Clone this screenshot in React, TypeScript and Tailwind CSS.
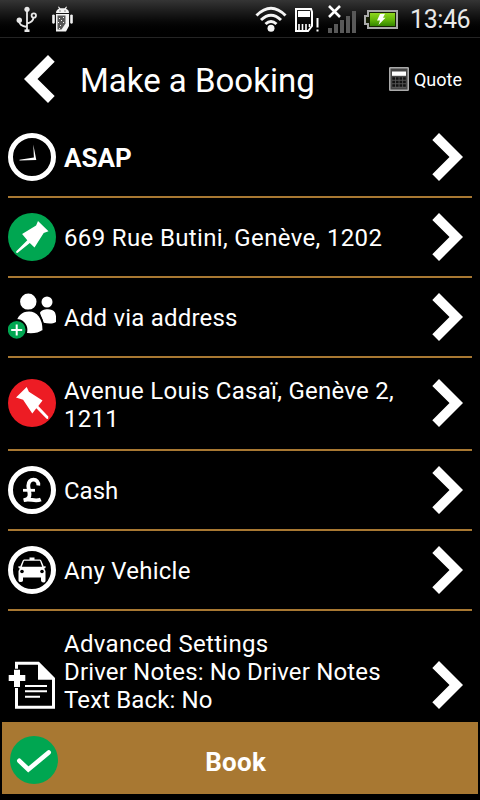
import type { ReactNode } from "react";

function Chevron({ left = false }: { left?: boolean }) {
  return (
    <svg width="32" height="48" viewBox="0 0 32 48" className={left ? "rotate-180" : ""}>
      <path d="M.3 7 7 0l24 24L7 48 .3 41.3 17.5 24z" fill="#fff" />
    </svg>
  );
}

function Ring({ children }: { children: ReactNode }) {
  return (
    <svg width="48" height="48" viewBox="0 0 48 48">
      <circle cx="24" cy="24" r="21.5" fill="none" stroke="#fff" strokeWidth="5" />
      {children}
    </svg>
  );
}

function ClockIcon() {
  return (
    <Ring>
      <path d="M25.3 11.5 28.3 27 11.5 27.4v-.6l14.4-2.2z" fill="#fff" />
    </Ring>
  );
}

function PickupIcon() {
  return (
    <svg width="48" height="48" viewBox="0 0 48 48">
      <circle cx="24" cy="24" r="24" fill="#00a651" />
      <path d="m30 8 10.5 10.2-4.8 1.800-9.200 14.500-4.700-4.500L9.400 40.100 8 39.500l.3-1.300 11-11-5.200-6.200 14-8.500z" fill="#fff" />
    </svg>
  );
}

function DropoffIcon() {
  return (
    <svg width="48" height="48" viewBox="0 0 48 48">
      <circle cx="24" cy="24" r="24" fill="#ed1c24" />
      <path d="m18.700 8 2.200 4.800 13.600 8.700-4.200 5.500 10 10.600-.2 2.400-1.500-.2-10.300-10.600-4 5.300-9.200-13.700L8 18.600z" fill="#fff" />
    </svg>
  );
}

function PeopleIcon() {
  return (
    <svg width="48" height="48" viewBox="0 0 48 48">
      <g fill="#fff">
        <circle cx="39" cy="9" r="5.500" />
        <path d="M32 20c1-4 12-5.500 15-.5 1.500 4 1.300 7 1 9.500-4 2.400-8 1.600-12.500.7z" />
        <circle cx="20.300" cy="8.700" r="9.200" stroke="#000" strokeWidth="2" />
        <path d="M7 31c1-8 6-13.500 14-13.500 9 0 14.500 8 14.500 20-7 5-18.500 5-24.500 0z" stroke="#000" strokeWidth="2" />
      </g>
      <circle cx="8.700" cy="36.800" r="9.800" fill="#00a651" stroke="#000" strokeWidth="1.800" />
      <path d="M8.700 31.500v11M3.200 37h11" stroke="#fff" strokeWidth="2" />
    </svg>
  );
}

function PoundIcon() {
  return (
    <Ring>
      <path
        d="M30.300 19.500c1-7.500-10.300-8.300-10 .3.200 3.500 2 7.500 1 10.700-.7 2.200-2.500 3.400-5.500 3.700 6-2.200 11 2 17-.7"
        fill="none"
        stroke="#fff"
        strokeWidth="3.800"
      />
      <path d="M15 24.300h12" stroke="#fff" strokeWidth="2.800" />
    </Ring>
  );
}

function TaxiIcon() {
  return (
    <Ring>
      <path d="M21.500 14v-2.500h5V14z" fill="#fff" />
      <path
        fillRule="evenodd"
        fill="#fff"
        d="M16 13.500h16q1 0 1.500 1.500l2.300 5.500 1.700-.5v2l-1.300.5 1.300 2.500v10q-.2 1.500-2.200 1.500T33 34.500v-3H15v3q-.2 1.500-2.300 1.500t-2.200-1.500V25l1.300-2.500-1.300-.5v-2l1.700.5 2.300-5.500q.5-1.500 1.500-1.500zM16 14.800l-2.200 6h20.400l-2.200-6z"
      />
      <circle cx="14" cy="25.500" r="1.800" />
      <circle cx="34" cy="25.500" r="1.800" />
    </Ring>
  );
}

function NotesIcon() {
  return (
    <svg width="48" height="48" viewBox="0 0 48 48">
      <path d="M8.500 2.200h21.800l15.200 15.300v28.800h-37z" fill="none" stroke="#fff" strokeWidth="3" />
      <path d="M30 1.500v17.200h17z" fill="#fff" />
      <path d="M17 25h22M17 30.300h22M17 35.700h15" stroke="#fff" strokeWidth="2" />
      <path d="M5 7.700h8V13h5.300v8H13v6H5v-6H0v-8h5z" />
      <path d="M9 8.700V26M.7 17h16.600" stroke="#fff" strokeWidth="6" />
    </svg>
  );
}

function CheckIcon() {
  return (
    <svg width="48" height="48" viewBox="0 0 48 48">
      <circle cx="24" cy="24" r="24" fill="#00a651" />
      <path d="m9.300 24.800 9 8.700L38.700 16.500" fill="none" stroke="#fff" strokeWidth="4.600" strokeLinecap="round" />
    </svg>
  );
}

function CalculatorIcon() {
  return (
    <svg width="20" height="24" viewBox="0 0 20 24">
      <rect x=".75" y=".75" width="18.500" height="22.500" rx=".5" fill="#444" stroke="#aaa" strokeWidth="1.500" />
      <path d="M3 4.500h14v4.300H3z" fill="#fff" />
      <path d="M3 10h14v11H3z" fill="#555" />
      <path d="M3.300 11.500h13.500M3.300 15h13.500M3.300 18.500h13.500" stroke="#111" strokeWidth="2.700" strokeDasharray="2.700 .9" />
    </svg>
  );
}

function UsbIcon() {
  return (
    <svg width="22" height="28" viewBox="0 0 22 28" fill="none" stroke="#e8e8e8" strokeWidth="1.800">
      <path d="M11 3v22M3 15c0 3 2 5 8 6M17.500 11c0 4-2 5.500-6.500 6.500" />
      <circle cx="11" cy="3.300" r="2.600" fill="#e8e8e8" stroke="none" />
      <circle cx="3.300" cy="14.200" r="2.700" fill="#e8e8e8" stroke="none" />
      <circle cx="17.800" cy="9.500" r="2.200" />
      <path d="M8.500 24.700h5" strokeWidth="2.600" />
    </svg>
  );
}

function DebugIcon() {
  return (
    <svg width="24" height="27" viewBox="0 0 24 27" fill="#f2f2f2">
      <path d="M5 7c0-2.500 1.500-3.500 3-4.200L7 1l.8-.5L9.300 2.300h4.400L15.200.5 16 1l-1 1.800c2 .8 3 2 3 4.200z" />
      <path d="M5 8h13v12l-3 5.500H5zM1.200 9q1.300-1.200 2.600 0v8q-1.300 1.500-2.600 0zM19.200 9q1.300-1.200 2.600 0v8q-1.300 1.500-2.600 0z" />
      <path d="M6.500 9.500h8v8l-4 6h-4z" fill="#555" />
      <path d="M8 12h1v1H8zm4-1h1v1h-1zm-2 3h1v1h-1zm-3 2h1v1H7zm5 0h1v1h-1zm-3 3h1v1H9zm-1 3h1v1H8z" />
      <path d="M8.500 4.500h1v1h-1zm5 0h1v1h-1z" fill="#222" />
    </svg>
  );
}

function WifiIcon() {
  return (
    <svg width="32" height="26" viewBox="0 0 32 26" fill="none" stroke="#f5f5f5" strokeWidth="3">
      <path d="M1.500 9.500Q16-5 30.500 9.500M6 14q10-9.500 20 0M10.500 18q5.500-5 11 0" />
      <circle cx="16" cy="22.300" r="3.500" fill="#f5f5f5" stroke="none" />
    </svg>
  );
}

function StorageIcon() {
  return (
    <svg width="24" height="24" viewBox="0 0 24 24">
      <path d="M1 1h15l1 3v14l-4 5H1z" fill="none" stroke="#fff" strokeWidth="2" />
      <path d="M3 3h12v6H3z" fill="#fff" />
      <path d="M4 16v6M7.500 16v6M11 16v6M14.500 16v3" stroke="#fff" strokeWidth="1.600" />
      <path d="M22.500 10v9.500M22.500 21.500V23.500" stroke="#fff" strokeWidth="2" />
    </svg>
  );
}

function SignalIcon() {
  return (
    <svg width="29" height="28" viewBox="0 0 29 28">
      <path d="M0 23h4v5H0zM6 19h4v9H6zM12 15h4v13h-4zM18 11h4v17h-4zM24 6h4v22h-4z" fill="#585858" />
      <path d="m1 1 11 11M12 1 1 12" stroke="#fff" strokeWidth="2.600" />
    </svg>
  );
}

function BatteryIcon() {
  return (
    <svg width="34" height="19" viewBox="0 0 34 19">
      <defs>
        <linearGradient id="charge" x1="0" y1="0" x2="0" y2="1">
          <stop offset="0" stopColor="#8fd61f" />
          <stop offset=".5" stopColor="#66b90a" />
          <stop offset="1" stopColor="#348500" />
        </linearGradient>
      </defs>
      <path d="M3 0h31v19H3v-4H0V5h3z" fill="#aaa" />
      <path d="M5 2h27v15H5v-4H2V7h3z" fill="#172005" />
      <path d="M6 3h25v13H6z" fill="url(#charge)" />
      <path d="m16 4 5-.3-2 4h2.500L14.500 15l1.500-4.500h-3z" fill="#fff" />
    </svg>
  );
}

const rows = [
  { icon: <ClockIcon />, label: "ASAP", style: "h-20", text: "pt-[2px] text-[26px] font-bold" },
  { icon: <PickupIcon />, label: "669 Rue Butini, Genève, 1202", style: "h-20", text: "pt-[2px] tracking-[0.35px]" },
  { icon: <PeopleIcon />, label: "Add via address", style: "h-20", text: "pt-[2px] tracking-[0.2px]" },
  {
    icon: <DropoffIcon />,
    label: "Avenue Louis Casaï, Genève 2, 1211",
    style: "h-[93px] pb-px",
    text: "pt-[4px] tracking-[0.26px]",
  },
  { icon: <PoundIcon />, label: "Cash", style: "h-20", text: "pt-[2px]" },
  { icon: <TaxiIcon />, label: "Any Vehicle", style: "h-20", text: "pt-[2px] tracking-[0.25px]" },
];

export default function App() {
  return (
    <div className="flex h-[800px] w-[480px] flex-col overflow-hidden bg-black font-['Roboto',sans-serif] text-white">
      {/* Status bar */}
      <div className="flex h-[38px] shrink-0 items-start border-b border-[#242424] bg-linear-to-b from-[#353535] to-black">
        <div className="mt-[6px] ml-4">
          <UsbIcon />
        </div>
        <div className="mt-[6px] ml-[13px]">
          <DebugIcon />
        </div>
        <div className="mt-[6px] ml-[180px]">
          <WifiIcon />
        </div>
        <div className="mt-2 ml-2">
          <StorageIcon />
        </div>
        <div className="mt-[5px] ml-[9px]">
          <SignalIcon />
        </div>
        <div className="mt-[10px] ml-[7px]">
          <BatteryIcon />
        </div>
        <span className="mt-[5px] ml-[12px] text-[25px] leading-[30px] tracking-[-0.4px] text-[#e8e8e8]">13:46</span>
      </div>

      {/* Title */}
      <header className="flex h-20 shrink-0 items-center pt-[2px] pl-[23px]">
        <Chevron left />
        <h1 className="ml-[25px] pt-[3px] text-[33px] leading-10">Make a Booking</h1>
        <div className="ml-auto flex items-center gap-[5px] pr-[18px]">
          <CalculatorIcon />
          <span className="pt-[2px] text-lg">Quote</span>
        </div>
      </header>

      <main className="min-h-0 flex-1 overflow-hidden px-2 text-2xl leading-7">
        {rows.map((row) => (
          <div key={row.label} className={`flex items-center border-b-2 border-[#a87832] ${row.style}`}>
            <div className="w-14 shrink-0">{row.icon}</div>
            <p className={`flex-1 leading-7 ${row.text}`}>{row.label}</p>
            <div className="mr-2 ml-5">
              <Chevron />
            </div>
          </div>
        ))}
        <div className="flex h-[148px] items-center">
          <div className="w-14 shrink-0">
            <NotesIcon />
          </div>
          <div className="flex-1 self-start pt-[19px]">
            <p className="tracking-[0.3px]">Advanced Settings</p>
            <p className="tracking-[0.16px]">Driver Notes: No Driver Notes</p>
            <p className="tracking-[0.12px]">Text Back: No</p>
          </div>
          <div className="mr-2">
            <Chevron />
          </div>
        </div>
      </main>

      {/* Submit */}
      <button className="mx-[2px] mb-[6px] grid h-[72px] shrink-0 grid-cols-[48px_1fr_56px] items-center bg-[#a87832] pt-[4px] pr-2 pl-[7.500px] text-[26px] font-bold">
        <CheckIcon />
        <span className="pt-1 tracking-[0.3px]">Book</span>
      </button>
    </div>
  );
}
